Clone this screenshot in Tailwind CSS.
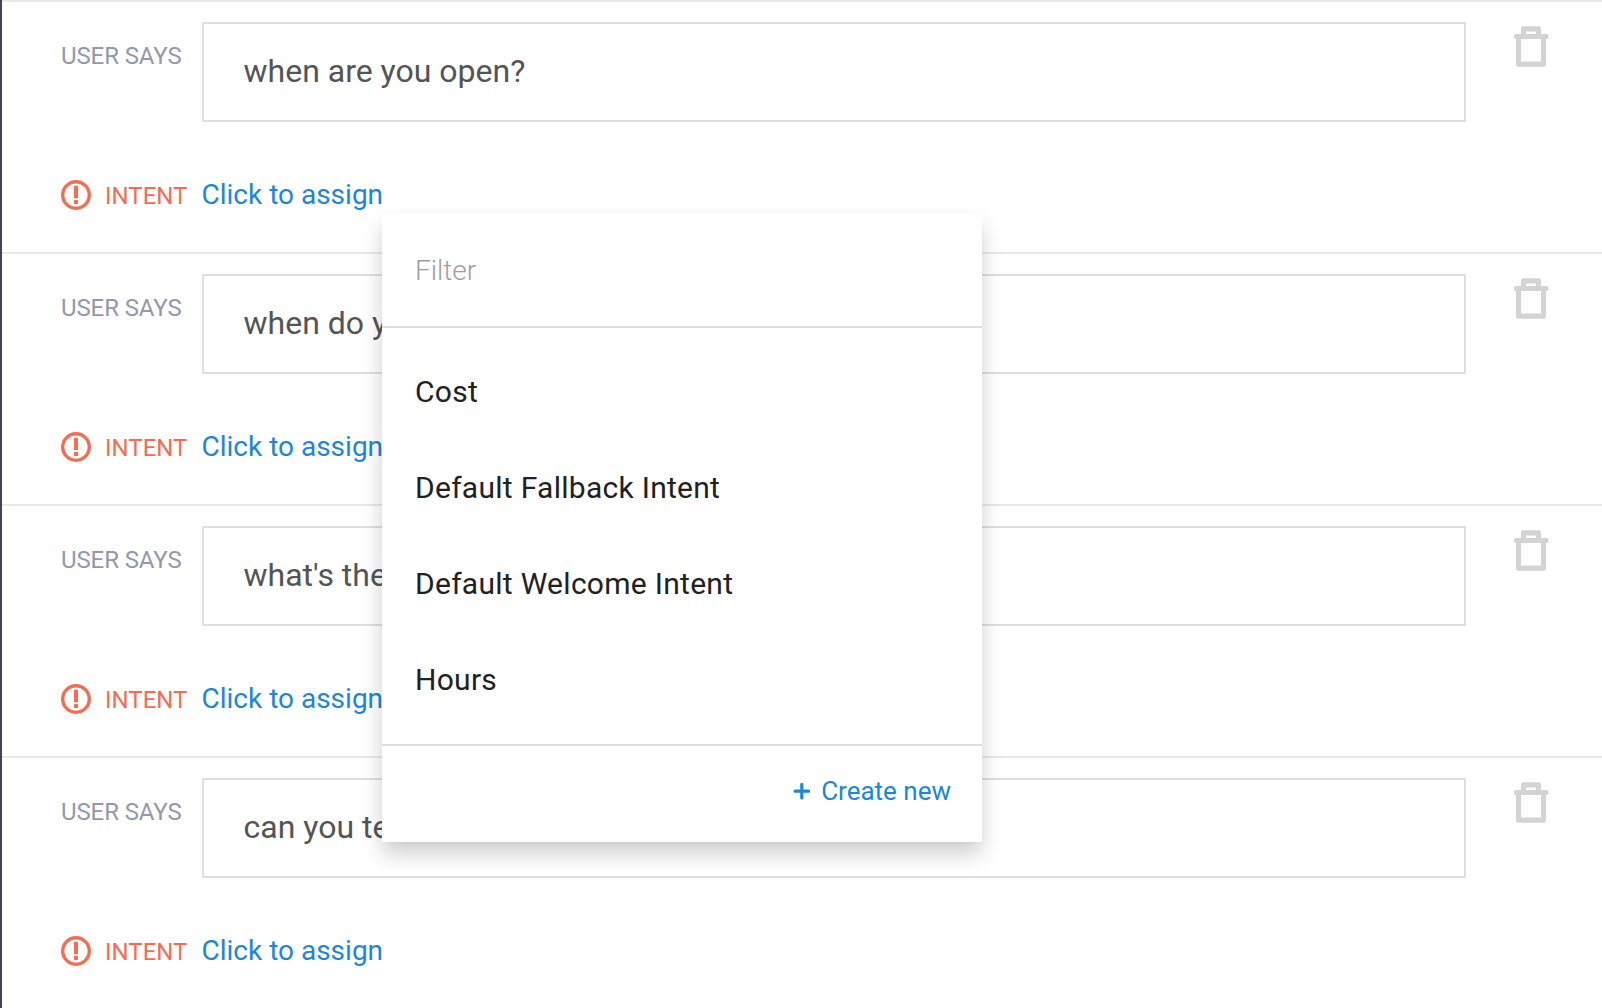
<!DOCTYPE html>
<html lang="en">
<head>
<meta charset="utf-8">
<title>Training</title>
<script src="https://cdn.jsdelivr.net/npm/@tailwindcss/browser@4"></script>
</head>
<body class="relative h-[1008px] overflow-hidden bg-white font-[Roboto,sans-serif]">
<svg class="hidden">
  <symbol id="trash" viewBox="-0.5 0 36 42">
    <path fill="#d3d3d3" fill-rule="evenodd" d="M9.500 .3H25.500Q27.500 .3 27.500 2.300V8H33Q35.200 8 35.200 10.500T33 13H32.500V38.500Q32.500 40.700 30.300 40.700H4.700Q2.500 40.700 2.500 38.500V13Q.300 13 .300 10.500T2.500 8H7.500V2.300Q7.500 .3 9.500 .3ZM12.500 5.500V8H22.500V5.500ZM7.500 13V35.500H27.500V13Z"/>
  </symbol>
  <symbol id="alert" viewBox="0 0 30 30">
    <circle cx="15" cy="15" r="13.300" fill="none" stroke="#f76c51" stroke-width="3.400"/>
    <path fill="#f76c51" d="M13.600 5.700h2.800q.6 0 .6.600V17.700q0 .6-.6.600h-2.800q-.6 0-.6-.600V6.300q0-.6.600-.600ZM13.600 20h2.800q.6 0 .6.600v2.700q0 .6-.6.600h-2.800q-.6 0-.6-.600v-2.700q0-.6.600-.600Z"/>
  </symbol>
</svg>

<main class="flex h-[1008px] flex-col border-l-2 border-[#43445c]">
  <section class="h-[252px] shrink-0 border-t-2 border-[#e8e8e8] pl-[59px]">
    <div class="flex pt-5">
      <span class="mt-5 w-[141px] shrink-0 text-2xl leading-7 tracking-[-0.1px] text-[#9398ab]">USER SAYS</span>
      <div class="flex h-[100px] w-[1264px] shrink-0 items-center border-2 border-[#dfdfdf] pb-0.5 pl-[39.500px] text-[32px] leading-10 text-[#545454]">when are you open?</div>
      <svg class="mt-1 ml-[47px] h-[42px] w-9 shrink-0"><use href="#trash"/></svg>
    </div>
    <div class="mt-[52px] flex items-baseline leading-10">
      <svg class="relative top-[6px] mr-[14px] h-[30px] w-[30px]"><use href="#alert"/></svg>
      <span class="w-[96.500px] text-2xl leading-10 text-[#f76c51]">INTENT</span>
      <a class="text-[28px] leading-10 text-[#1a87da]">Click to assign</a>
    </div>
  </section>
  <section class="h-[252px] shrink-0 border-t-2 border-[#e8e8e8] pl-[59px]">
    <div class="flex pt-5">
      <span class="mt-5 w-[141px] shrink-0 text-2xl leading-7 tracking-[-0.1px] text-[#9398ab]">USER SAYS</span>
      <div class="flex h-[100px] w-[1264px] shrink-0 items-center border-2 border-[#dfdfdf] pb-0.5 pl-[39.500px] text-[32px] leading-10 text-[#545454]">when do y</div>
      <svg class="mt-1 ml-[47px] h-[42px] w-9 shrink-0"><use href="#trash"/></svg>
    </div>
    <div class="mt-[52px] flex items-baseline leading-10">
      <svg class="relative top-[6px] mr-[14px] h-[30px] w-[30px]"><use href="#alert"/></svg>
      <span class="w-[96.500px] text-2xl leading-10 text-[#f76c51]">INTENT</span>
      <a class="text-[28px] leading-10 text-[#1a87da]">Click to assign</a>
    </div>
  </section>
  <section class="h-[252px] shrink-0 border-t-2 border-[#e8e8e8] pl-[59px]">
    <div class="flex pt-5">
      <span class="mt-5 w-[141px] shrink-0 text-2xl leading-7 tracking-[-0.1px] text-[#9398ab]">USER SAYS</span>
      <div class="flex h-[100px] w-[1264px] shrink-0 items-center border-2 border-[#dfdfdf] pb-0.5 pl-[39.500px] text-[32px] leading-10 text-[#545454]">what's the</div>
      <svg class="mt-1 ml-[47px] h-[42px] w-9 shrink-0"><use href="#trash"/></svg>
    </div>
    <div class="mt-[52px] flex items-baseline leading-10">
      <svg class="relative top-[6px] mr-[14px] h-[30px] w-[30px]"><use href="#alert"/></svg>
      <span class="w-[96.500px] text-2xl leading-10 text-[#f76c51]">INTENT</span>
      <a class="text-[28px] leading-10 text-[#1a87da]">Click to assign</a>
    </div>
  </section>
  <section class="h-[252px] shrink-0 border-t-2 border-[#e8e8e8] pl-[59px]">
    <div class="flex pt-5">
      <span class="mt-5 w-[141px] shrink-0 text-2xl leading-7 tracking-[-0.1px] text-[#9398ab]">USER SAYS</span>
      <div class="flex h-[100px] w-[1264px] shrink-0 items-center border-2 border-[#dfdfdf] pb-0.5 pl-[39.500px] text-[32px] leading-10 text-[#545454]">can you te</div>
      <svg class="mt-1 ml-[47px] h-[42px] w-9 shrink-0"><use href="#trash"/></svg>
    </div>
    <div class="mt-[52px] flex items-baseline leading-10">
      <svg class="relative top-[6px] mr-[14px] h-[30px] w-[30px]"><use href="#alert"/></svg>
      <span class="w-[96.500px] text-2xl leading-10 text-[#f76c51]">INTENT</span>
      <a class="text-[28px] leading-10 text-[#1a87da]">Click to assign</a>
    </div>
  </section>
</main>

<!-- Intent picker -->
<div class="absolute top-[214px] left-[382px] flex h-[628px] w-[600px] flex-col bg-white shadow-[0_12px_20px_rgba(0,0,0,0.19),0_4px_6px_-4px_rgba(0,0,0,0.05)]">
  <div class="flex h-[114px] items-center border-b-2 border-[#dfdfdf] pt-0.5 pl-[33px] text-[28px] font-light text-[#9e9e9e]">Filter</div>
  <ul class="h-[418px] border-b-2 border-[#dfdfdf] pt-[15px] text-[30px] tracking-[0.28px] text-[#212121]">
    <li class="flex h-24 items-center pl-[33px]">Cost</li>
    <li class="flex h-24 items-center pl-[33px]">Default Fallback Intent</li>
    <li class="flex h-24 items-center pl-[33px]">Default Welcome Intent</li>
    <li class="flex h-24 items-center pl-[33px]">Hours</li>
  </ul>
  <div class="flex h-24 items-center justify-end pr-[31px] pb-1.5 text-[26px] text-[#1a87da]">
    <svg class="mr-[11px] h-[17px] w-[17px]" viewBox="0 0 17 17"><path d="M8.800 1.500V14.900M2.100 8.200H15.500" stroke="#1a87da" stroke-width="3.200" stroke-linecap="round"/></svg>
    Create new
  </div>
</div>
</body>
</html>
